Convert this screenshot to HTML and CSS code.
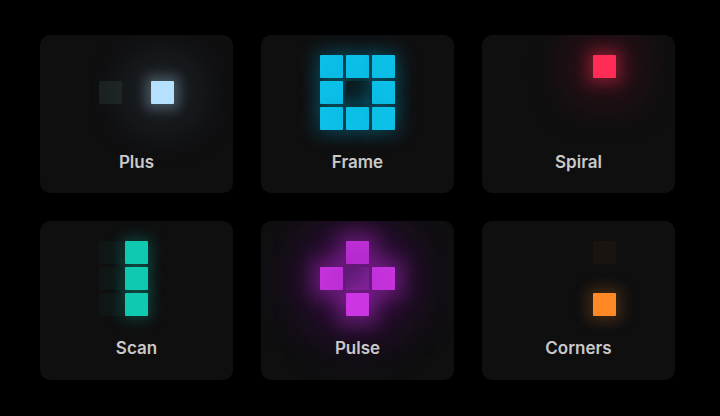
FILE: index.html
```html
<!DOCTYPE html>
<html>
<head>
<meta charset="utf-8">
<link rel="stylesheet" href="styles.css">
</head>
<body>
<main class="board">
  <section class="card plus">
    <div class="grid">
      <i></i><i></i><i></i>
      <i class="dim"></i><i></i><i class="on"></i>
      <i></i><i></i><i></i>
    </div>
    <span class="label">Plus</span>
  </section>
  <section class="card frame">
    <div class="grid">
      <i class="on"></i><i class="on"></i><i class="on"></i>
      <i class="on"></i><i class="hole"></i><i class="on"></i>
      <i class="on"></i><i class="on"></i><i class="on"></i>
    </div>
    <span class="label">Frame</span>
  </section>
  <section class="card spiral">
    <div class="grid">
      <i></i><i></i><i class="on"></i>
      <i></i><i></i><i></i>
      <i></i><i></i><i></i>
    </div>
    <span class="label">Spiral</span>
  </section>
  <section class="card scan">
    <div class="grid">
      <i class="dim"></i><i class="on"></i><i></i>
      <i class="dim"></i><i class="on"></i><i></i>
      <i class="dim"></i><i class="on"></i><i></i>
    </div>
    <span class="label">Scan</span>
  </section>
  <section class="card pulse">
    <div class="grid">
      <i></i><i class="on"></i><i></i>
      <i class="on"></i><i class="hole"></i><i class="on"></i>
      <i></i><i class="on"></i><i></i>
    </div>
    <span class="label">Pulse</span>
  </section>
  <section class="card corners">
    <div class="grid">
      <i></i><i></i><i class="dim"></i>
      <i></i><i></i><i></i>
      <i></i><i></i><i class="on"></i>
    </div>
    <span class="label">Corners</span>
  </section>
</main>
</body>
</html>
```
FILE: styles.css
```css
html, body {
  margin: 0;
  padding: 0;
  background: #000;
  width: 720px;
  height: 416px;
  overflow: hidden;
}

.board {
  display: grid;
  grid-template-columns: repeat(3, 193px);
  grid-template-rows: 158px 159px;
  column-gap: 28px;
  row-gap: 28px;
  padding: 35px 0 0 40px;
}

.card {
  background: #0f0f10;
  border-radius: 10px;
  display: flex;
  flex-direction: column;
  align-items: center;
  padding-top: 20px;
  box-sizing: border-box;
  overflow: hidden;
}

.grid {
  display: grid;
  grid-template-columns: repeat(3, 23px);
  grid-template-rows: repeat(3, 23px);
  gap: 3px;
}

.grid i {
  display: block;
  border-radius: 1px;
}

.label {
  margin-top: 22px;
  font-family: Inter, "Liberation Sans", sans-serif;
  font-weight: 600;
  font-size: 17px;
  line-height: 20px;
  color: #c9c9c9;
}

/* Plus */
.plus .on {
  background: #b5e1ff;
  box-shadow: 0 0 12px 5px rgba(170, 210, 240, 0.3), 0 0 44px 20px rgba(110, 140, 160, 0.2);
}
.plus .dim { background: #1b2020; }

/* Frame */
.frame .on {
  background: #0cc0e8;
  box-shadow: 0 0 18px 4px rgba(0, 170, 210, 0.32);
}
.frame .hole { background: #0b1d22; }

/* Spiral */
.spiral .on {
  background: #ff2d55;
  box-shadow: 0 0 14px 6px rgba(255, 45, 85, 0.34), 0 0 44px 20px rgba(170, 25, 55, 0.26);
}

/* Scan */
.scan .on {
  background: #10c9b1;
  box-shadow: 0 0 14px 3px rgba(16, 201, 177, 0.28);
}
.scan .dim { background: #0f1716; }

/* Pulse */
.pulse .on {
  background: #cc36e2;
  box-shadow: 0 0 18px 8px rgba(200, 50, 225, 0.34), 0 0 50px 24px rgba(130, 25, 160, 0.24);
}
.pulse .hole { background: #55206a; }

/* Corners */
.corners .on {
  background: #ff8a25;
  box-shadow: 0 0 14px 5px rgba(255, 138, 37, 0.22);
}
.corners .dim { background: #1a1411; }
```
